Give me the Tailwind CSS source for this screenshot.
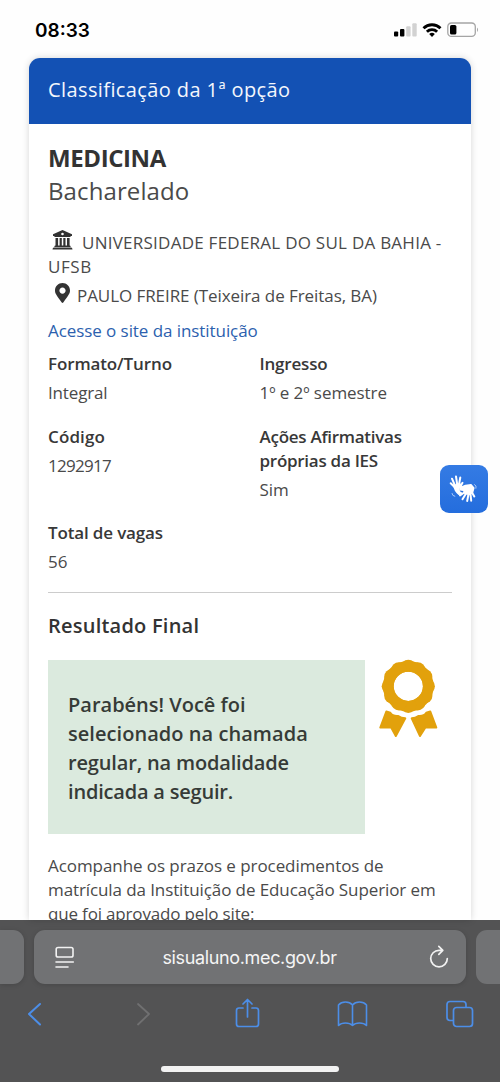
<!DOCTYPE html>
<html lang="pt-BR">
<head>
<meta charset="utf-8">
<meta name="viewport" content="width=device-width, initial-scale=1">
<title>Classificação</title>
<script src="https://cdn.jsdelivr.net/npm/@tailwindcss/browser@4"></script>
</head>
<body class="bg-white">
<div class="flex h-[1082px] w-[500px] flex-col overflow-hidden bg-[#fefefe] font-['Open_Sans',sans-serif] text-[17px] leading-6 font-normal text-[#4a4a4a]">

  <!-- Status bar -->
  <header class="flex h-[58px] shrink-0 items-start justify-between pr-[20px] pl-[35px]">
    <span class="mt-[19px] font-['Inter',sans-serif] text-[19px] font-semibold text-black">08:33</span>
    <div class="mt-[22px] flex items-start">
      <svg class="h-4 w-[24px]" viewBox="0 0 24 16">
        <rect x="0" y="9.5" width="4.2" height="5" rx="1" fill="#000"/>
        <rect x="6" y="7" width="4.4" height="7.5" rx="1" fill="#000"/>
        <rect x="12.2" y="4.2" width="4.4" height="10.3" rx="1" fill="#d2d2d2"/>
        <rect x="18.3" y="1.2" width="4.4" height="13.3" rx="1" fill="#d2d2d2"/>
      </svg>
      <svg class="ml-[4px] h-4 w-[20px]" viewBox="0 0 20 16" fill="none" stroke="#000" stroke-width="2.9">
        <path d="M1.500 6.200a12.300 12.300 0 0 1 17 0"/>
        <path d="M4.900 9.700a7.400 7.400 0 0 1 10.200 0"/>
        <path d="M10 14.900 7.200 12a4 4 0 0 1 5.600 0z" fill="#000" stroke="none"/>
      </svg>
      <svg class="ml-[5px] h-4 w-[33px]" viewBox="0 0 33 16">
        <rect x=".8" y="1" width="27.500" height="13.400" rx="3.600" fill="none" stroke="#a5a5a5" stroke-width="1.300"/>
        <rect x="3" y="3" width="6.400" height="9.500" rx="1.600" fill="#000"/>
        <path d="M30 5.500q2 2.200 0 4.600z" fill="#a5a5a5"/>
      </svg>
    </div>
  </header>

  <!-- Page -->
  <div class="relative h-[862px] shrink-0 px-[29px]">
    <main class="h-[862px] overflow-hidden rounded-t-[11px] bg-white shadow-[0_0_7px_rgba(0,0,0,0.16)]">
      <div class="h-[66px] bg-[#1351b4] px-[19px] pt-[18px] text-[20px] leading-[28px] font-medium tracking-[0.4px] whitespace-nowrap text-[#f4f7fc]">Classificação da 1ª opção</div>
      <div class="px-[19px] pt-[18px] whitespace-nowrap">
        <h1 class="text-[24px] leading-8 font-bold tracking-[-0.4px] text-[#333]">MEDICINA</h1>
        <p class="mt-px text-[24px] leading-8 tracking-[0.1px]">Bacharelado</p>

        <div class="mt-[24px] flex h-6 items-center">
          <svg class="mr-[9px] -mt-[7px] ml-[4px] h-[20px] w-[21px]" viewBox="0 0 21 20" fill="#333">
            <path fill-rule="evenodd" d="M10.500 0 20 4.200V6H18.800q0 .9-.9.9H3.100q-.9 0-.9-.9H1V4.200zM10.500 2.700a1.300 1.300 0 1 0 0 2.600 1.300 1.300 0 0 0 0-2.600z"/>
            <path d="M3.500 8h2.600v7.600h1.500V8h2.200v7.600h1.500V8h2.200v7.600H15V8h2.600v7.600q1 0 1 1v.4H2.400v-.4q0-1 1.100-1zM1.700 17.600h17.600q1.200.3 1.200 1.900H.5q0-1.600 1.200-1.900z"/>
          </svg>
          <span class="tracking-[0.25px]">UNIVERSIDADE FEDERAL DO SUL DA BAHIA -</span>
        </div>
        <p class="tracking-[0.6px]">UFSB</p>
        <div class="mt-[5px] flex h-6 items-center">
          <svg class="mr-[7px] -mt-[7px] ml-[7px] h-[20px] w-[15px]" viewBox="0 0 384 512" fill="#333"><path d="M172.268 501.670C26.970 291.031 0 269.413 0 192 0 85.961 85.961 0 192 0s192 85.961 192 192c0 77.413-26.970 99.031-172.268 309.670-9.535 13.774-29.930 13.773-39.464 0zM192 272c44.183 0 80-35.817 80-80s-35.817-80-80-80-80 35.817-80 80 35.817 80 80 80z"/></svg>
          <span class="tracking-[-0.07px]">PAULO FREIRE (Teixeira de Freitas, BA)</span>
        </div>
        <a class="mt-[11px] block tracking-[-0.07px] text-[#2c5fae]">Acesse o site da instituição</a>

        <dl class="mt-[9px] grid grid-cols-[211.500px_1fr]">
          <div class="h-[73px]"><dt class="font-semibold tracking-[-0.12px] text-[#383838]">Formato/Turno</dt><dd class="mt-[5px] tracking-[-0.15px]">Integral</dd></div>
          <div class="h-[73px]"><dt class="font-semibold tracking-[-0.19px] text-[#383838]">Ingresso</dt><dd class="mt-[5px] tracking-[-0.07px]">1º e 2º semestre</dd></div>
          <div class="h-[96px]"><dt class="font-semibold tracking-[0.12px] text-[#383838]">Código</dt><dd class="mt-[5px] tracking-[-0.7px]">1292917</dd></div>
          <div class="h-[96px]"><dt class="font-semibold tracking-[-0.27px] text-[#383838]">Ações Afirmativas<br>próprias da IES</dt><dd class="mt-[5px]">Sim</dd></div>
          <div class="h-[71px]"><dt class="font-semibold tracking-[-0.15px] text-[#383838]">Total de vagas</dt><dd class="mt-[5px]">56</dd></div>
        </dl>
        <hr class="border-[#ccc]">

        <h2 class="mt-[19px] text-[20px] leading-7 font-semibold tracking-[0.23px] text-[#333]">Resultado Final</h2>
        <div class="mt-[20px] flex">
          <div class="h-[174px] w-[317px] bg-[#dbeade] pt-[30px] pl-[20px] text-[20px] leading-[29px] font-[560] text-[#363b37]">
            <p>Parabéns! Você foi</p>
            <p class="tracking-[0.05px]">selecionado na chamada</p>
            <p class="tracking-[-0.16px]">regular, na modalidade</p>
            <p class="tracking-[-0.2px]">indicada a seguir.</p>
          </div>
          <svg class="-mt-px ml-[14px] h-[79px] w-[59px]" viewBox="379 659 59 79" fill="#e2a10c">
            <circle cx="408.300" cy="686.300" r="20" fill="none" stroke="#e2a10c" stroke-width="10.800"/>
            <defs>
              <mask id="hole"><rect x="379" y="659" width="59" height="79" fill="#fff"/><circle cx="408.300" cy="686.300" r="14.600" fill="#000"/></mask>
            </defs>
            <g mask="url(#hole)">
              <circle cx="408.300" cy="667.600" r="7.900"/><circle cx="417.650" cy="670.100" r="7.900"/><circle cx="424.500" cy="676.950" r="7.900"/><circle cx="427" cy="686.300" r="7.900"/><circle cx="424.500" cy="695.650" r="7.900"/><circle cx="417.650" cy="702.500" r="7.900"/><circle cx="408.300" cy="705" r="7.900"/><circle cx="398.950" cy="702.500" r="7.900"/><circle cx="392.100" cy="695.650" r="7.900"/><circle cx="389.600" cy="686.300" r="7.900"/><circle cx="392.100" cy="676.950" r="7.900"/><circle cx="398.950" cy="670.100" r="7.900"/>
            </g>
            <g stroke="#e2a10c" stroke-width="2" stroke-linejoin="round">
              <path d="M386.300 711.500 380.300 727.500H391.200L395.800 736 405.300 718.300Q401 718 398.300 716 392.500 716.500 390.300 712.800z"/>
              <path d="M430.300 711.500 436.300 727.500H425.400L420 736 411.700 718.300Q415.600 718 418.300 716 424.100 716.500 426.300 712.800z"/>
            </g>
          </svg>
        </div>
        <div class="mt-[20px]">
          <p class="tracking-[-0.07px]">Acompanhe os prazos e procedimentos de</p>
          <p class="tracking-[-0.1px]">matrícula da Instituição de Educação Superior em</p>
          <p class="tracking-[-0.17px]">que foi aprovado pelo site:</p>
        </div>
      </div>
    </main>

    <!-- Sign language widget, floating over the page edge -->
    <button class="absolute top-[407px] left-[440px] flex size-12 items-center justify-center rounded-[9px] bg-gradient-to-b from-[#347be4] to-[#246ddd]">
      <svg class="size-[32px]" viewBox="0 0 32 32" fill="none" stroke="#fff" stroke-linecap="round" stroke-linejoin="round">
        <path d="M6 12.500 12 11l1.500 2.500-3 2 1 3.500 2.500 1.500-3 .8Q6.500 18 6 12.500z" fill="#fff" stroke-width="1.500"/>
        <path d="M6.500 14 2.700 10.300M7 12.500 4 5.700M9.200 11.500 8 3.500M11 11.500 12.300 4.500M12.700 13l1.800-3.200" stroke-width="2"/>
        <path d="m12 14.700 5.500-2.200 5.500-.7 2.800 3.200-1.300 4.500-3.500 1.800-4-.8-1.500-3.200-3.500-.5z" fill="#fff" stroke-width="1.500"/>
        <path d="m17 19-5 3.500M18.200 20.200l-3.700 6M20.500 21l-1.300 7M22.500 21l.7 6.700M24 19.500l2.300 4" stroke-width="2"/>
        <path d="M26.500 11.500q2.500 1 1.500 3.800M4 20.500q.2 2.500 2.800 2.800" stroke="#a8c8f7" stroke-width="1"/>
      </svg>
    </button>
  </div>

  <!-- Browser toolbar -->
  <footer class="flex h-[162px] shrink-0 flex-col bg-[#535354] pt-[10px]">
    <div class="flex h-[54px] shrink-0 gap-[10px]">
      <div class="w-[24px] rounded-r-[11px] bg-[#717274] shadow-[0_1px_5px_rgba(0,0,0,0.15)]"></div>
      <div class="flex w-[432px] items-center justify-between rounded-[11px] bg-[#717274] pr-[17px] pl-[21px] shadow-[0_1px_5px_rgba(0,0,0,0.15)]">
        <svg class="h-[23px] w-[20px]" viewBox="0 0 20 23" fill="none" stroke="#f2f2f2" stroke-width="1.600" stroke-linecap="round"><rect x="1.200" y="1.500" width="16.800" height="9.500" rx="1.800"/><path d="M1 16h17.300M1 21h12"/></svg>
        <span class="mt-[1px] -ml-[5px] font-['Inter',sans-serif] text-[18px] font-normal tracking-[-0.350px] text-[#f5f5f5]">sisualuno.mec.gov.br</span>
        <svg class="h-[24px] w-[20px]" viewBox="0 0 20 24" fill="none" stroke="#f2f2f2" stroke-width="1.700" stroke-linecap="round" stroke-linejoin="round"><path d="M13.500 5.300H10a8.300 8.300 0 1 0 8.300 8.300M9.800 1.300l4 4-4 4"/></svg>
      </div>
      <div class="w-[24px] rounded-l-[11px] bg-[#717274]"></div>
    </div>
    <nav class="mt-[14px] flex h-[32px] items-center pl-[27px] text-[#4c8ee8]">
      <svg class="h-[24px] w-[15px]" viewBox="0 0 15 24" fill="none" stroke="currentColor" stroke-width="2" stroke-linecap="round" stroke-linejoin="round"><path d="M13 2 2 12l11 10.500"/></svg>
      <svg class="ml-[94px] h-[24px] w-[15px]" viewBox="0 0 15 24" fill="none" stroke="#707071" stroke-width="1.800" stroke-linecap="round" stroke-linejoin="round"><path d="m2 2 11 10L2 22.500"/></svg>
      <svg class="ml-[84px] h-[32px] w-[25px]" viewBox="0 0 25 32" fill="none" stroke="currentColor" stroke-width="1.700" stroke-linecap="round" stroke-linejoin="round"><path d="M8 10H4q-2.500 0-2.500 2.500V26q0 2.500 2.500 2.500h17q2.500 0 2.500-2.500V12.500Q23.500 10 21 10h-4M12.500 19V2M8 6l4.500-4.500L17 6"/></svg>
      <svg class="ml-[77px] h-[28px] w-[31px]" viewBox="0 0 31 28" fill="none" stroke="currentColor" stroke-width="1.600" stroke-linecap="round" stroke-linejoin="round"><path d="M15.500 5Q13 2 8.500 2T1.500 5v20.500Q4 23 8.500 23t7 2.500Q18 23 22.500 23t7 2.500V5q-2.500-3-7-3t-7 3zv20.500"/></svg>
      <svg class="ml-[77px] h-[28px] w-[29px]" viewBox="0 0 29 28" fill="none" stroke="currentColor" stroke-width="1.700" stroke-linejoin="round"><rect x="8.500" y="7.500" width="19" height="19" rx="3"/><path d="M8.500 20.500H5q-3 0-3-3V4.500q0-3 3-3h13q3 0 3 3v3"/></svg>
    </nav>
    <div class="mt-[36px] ml-[161px] h-[6px] w-[178px] rounded-full bg-[#f2f2f2]"></div>
  </footer>
</div>
</body>
</html>
